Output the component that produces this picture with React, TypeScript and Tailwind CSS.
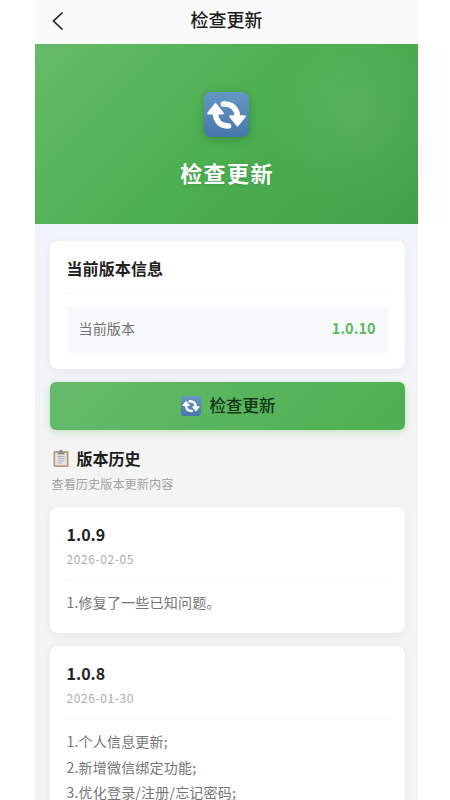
import { ReactNode } from 'react';

const HISTORY = [
    { version: '1.0.9', date: '2026-02-05', notes: ['1.修复了一些已知问题。'] },
    { version: '1.0.8', date: '2026-01-30', notes: ['1.个人信息更新;', '2.新增微信绑定功能;', '3.优化登录/注册/忘记密码;'] },
];

function RefreshIcon({ className }: { className?: string }) {
    return (
        <svg viewBox="0 0 45 45" className={className}>
            <defs>
                <linearGradient id="refreshBg" x1="0" y1="0" x2="0" y2="1">
                    <stop offset="0" stopColor="#6397c4" />
                    <stop offset="1" stopColor="#4878ac" />
                </linearGradient>
            </defs>
            <rect width="45" height="45" rx="7" fill="url(#refreshBg)" />
            <path d="M19.500 12c8-.5 13.500 4.500 13.800 12" fill="none" stroke="#fff" strokeWidth="5.600" strokeLinecap="round" />
            <path d="M11.500 21c0 8 5 13 13 13" fill="none" stroke="#fff" strokeWidth="5.600" strokeLinecap="round" />
            <path d="M11.500 12.500 18.500 21.300H4.500Z M33.500 33 26.500 24.500H40.500Z" fill="#fff" stroke="#fff" strokeWidth="2.600" strokeLinejoin="round" />
        </svg>
    );
}

function ClipboardIcon() {
    return (
        <svg viewBox="0 0 16 18" className="w-4 h-[18px]">
            <rect x="0.500" y="2" width="15" height="16" rx="1" fill="#b99b79" />
            <rect x="2.200" y="3.800" width="11.600" height="12.500" fill="#e4e6e6" />
            <path d="M4.500 3.300h1.700c0-3.700 3.600-3.700 3.600 0h1.700v2.200h-7Z" fill="#8b9193" />
            <path d="M4.500 7.500h7M4.500 9.700h7M4.500 11.900h7M4.500 14h4.500" stroke="#a5a8aa" strokeWidth="0.900" />
        </svg>
    );
}

function Card({ children, className = '' }: { children: ReactNode; className?: string }) {
    return <div className={`bg-white rounded-lg px-[17px] shadow-[0_2px_8px_rgba(0,0,0,0.06)] ${className}`}>{children}</div>;
}

export default function App() {
    return (
        <div className="h-[800px] overflow-hidden bg-white font-['Noto_Sans_CJK_SC',sans-serif] whitespace-nowrap">
            <div className="ml-[35px] w-[383px] h-full flex flex-col bg-[linear-gradient(180deg,#f0f4fc_224px,#f4f4f5_440px)]">
                {/* NAV BAR */}
                <header className="h-11 shrink-0 bg-[#fafafa] grid grid-cols-[60px_1fr_60px] items-center">
                    <svg viewBox="0 0 12 20" className="w-3 h-5 ml-[17px] -mt-0.5" fill="none" stroke="#222" strokeWidth="1.700">
                        <path d="M10.500 1.500 1.500 10l9 8.500" />
                    </svg>
                    <h1 className="text-center text-lg leading-none text-[#1c1c1c] font-medium -mt-1.5">检查更新</h1>
                </header>

                {/* HERO */}
                <section className="h-[180px] shrink-0 flex flex-col items-center pt-12 bg-[radial-gradient(circle_at_84%_38%,rgba(255,255,255,0.08)_0%,transparent_28%),linear-gradient(135deg,#66bb6a_0%,#4caf50_50%,#43a047_100%)]">
                    <RefreshIcon className="w-[45px] h-[45px] drop-shadow-[0_2px_4px_rgba(0,0,0,0.2)]" />
                    <h2 className="mt-6 pl-px text-[22px] leading-[22px] font-bold tracking-[1.400px] text-white [text-shadow:0_1px_3px_rgba(0,0,0,0.12)]">检查更新</h2>
                </section>

                <main className="pl-[14.500px] pr-[13.500px] pt-[17px]">
                    <Card className="h-32 pt-[15px]">
                        <h3 className="text-base leading-6 tracking-[0.100px] font-bold text-[#222] pb-[13px] border-b border-[#f9f9f9]">当前版本信息</h3>
                        <div className="mt-3 h-[47px] px-3 pb-1 rounded bg-[#f8f9fb] flex items-center justify-between">
                            <span className="text-sm tracking-[0.150px] text-[#717171]">当前版本</span>
                            <span className="text-[14.500px] font-bold text-[#5cb860]">1.0.10</span>
                        </div>
                    </Card>

                    <button className="mt-[13px] w-full h-12 rounded-md pb-0.5 flex items-center justify-center gap-[9px] bg-[linear-gradient(135deg,#66bb6a,#4caf50)] shadow-[0_2px_7px_rgba(76,175,80,0.3)]">
                        <RefreshIcon className="w-5 h-5 ml-0.5 mt-0.5" />
                        <span className="text-[16.500px] leading-none font-medium text-[#12351a]">检查更新</span>
                    </button>

                    <div className="mt-4 pl-[3px] flex items-center gap-2">
                        <ClipboardIcon />
                        <h3 className="text-base leading-6 font-bold text-[#1d1d1d]">版本历史</h3>
                    </div>
                    <p className="mt-[5px] pl-0.5 text-[12.200px] leading-[18px] text-[#a3a3a3]">查看历史版本更新内容</p>

                    <div className="mt-[14px] flex flex-col gap-[13px]">
                        {HISTORY.map((item) => (
                            <Card key={item.version} className="pt-[15px] pb-[17.500px]">
                                <div className="text-base leading-6 font-bold text-[#222]">{item.version}</div>
                                <div className="mt-1 text-xs leading-[18px] tracking-[0.600px] text-[#acacac]">{item.date}</div>
                                <div className="mt-[11px] pt-[10px] border-t border-[#f7f7f7]">
                                    {item.notes.map((note) => (
                                        <p key={note} className="text-sm leading-[25.500px] tracking-[0.200px] text-[#757575]">{note}</p>
                                    ))}
                                </div>
                            </Card>
                        ))}
                    </div>
                </main>
            </div>
        </div>
    );
}
